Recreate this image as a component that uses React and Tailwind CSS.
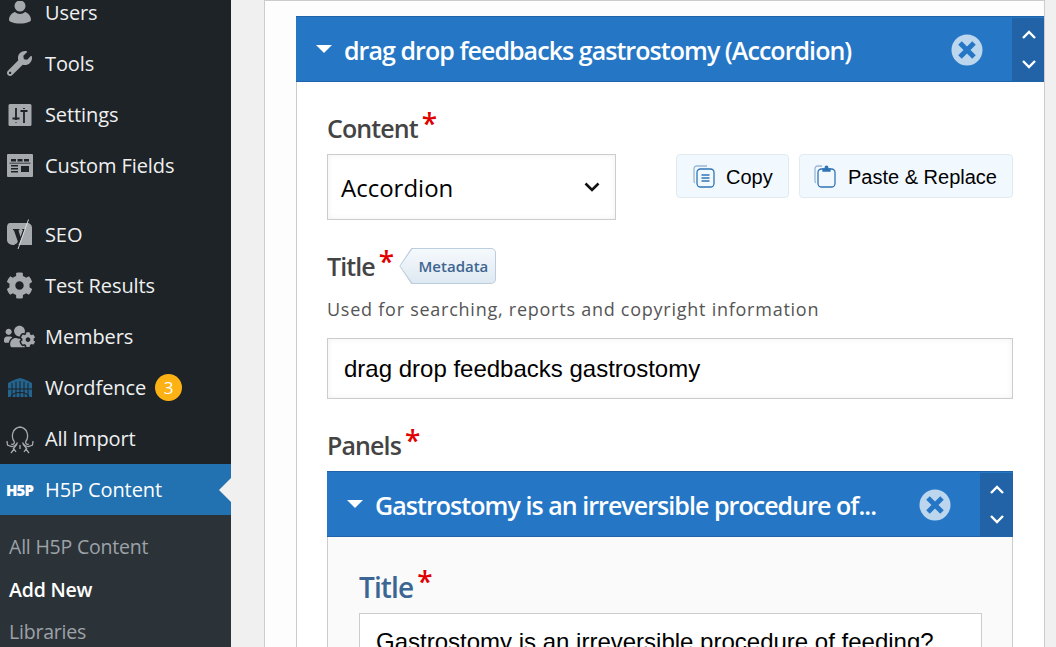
import React from 'react';
import { FaCog, FaUsersCog, FaWrench } from 'react-icons/fa';

const sans = "font-['Open_Sans','Noto_Sans',sans-serif]";

function UsersIcon() {
  return (
    <svg viewBox="0 0 24 24" className="w-[24px] h-[24px]" fill="currentColor">
      <circle cx="12" cy="5" r="5.5" />
      <path d="M1 19c0-5 4-7.5 6-8 1.500 1.300 3 2 5 2s3.500-.7 5-2c2 .5 6 3 6 8 0 1.500-4 3.500-11 3.500S1 20.500 1 19z" />
    </svg>
  );
}

function SettingsIcon() {
  return (
    <svg viewBox="0 0 24 22" className="w-[24px] h-[22px]">
      <rect x="0.500" y="0" width="23" height="22" rx="1.500" fill="currentColor" />
      <path d="M8 4v12M4.500 14.500h7M8 18v.5M16 4v1M12.500 7h7M16 8v11" stroke="#1d2327" strokeWidth="1.800" fill="none" />
    </svg>
  );
}

function FieldsIcon() {
  return (
    <svg viewBox="0 0 26 23" className="w-[26px] h-[23px]">
      <rect width="26" height="23" rx="1" fill="currentColor" />
      <path d="M4 5h5v2.500H4zM10.500 5h5v2.500h-5zM17 5h5v2.500h-5zM4 11h7v1.500H4zM4 14h7v1.500H4zM4 17h7v1.500H4zM14 12h8v6h-8z" fill="#1d2327" />
      <path d="M2.500 9.200h21" stroke="#1d2327" strokeWidth="0.800" />
    </svg>
  );
}

function YoastIcon() {
  return (
    <svg viewBox="0 0 27 31" className="w-[27px] h-[31px]">
      <path d="M4 4h17c3 0 5 2 5 5v17H8c-4 0-7-2-7-5V8c0-2 1-4 3-4z" fill="currentColor" />
      <path d="M7 10h6.500v1l-1 .5 2 6.500 2.500-7-1-.5v-.5h3l-5 13c-1 2.500-2 4-5 4.500l-.5-2c1.500-.5 3-1.500 3.300-3L8 11.500 7 11z" fill="#1d2327" />
      <path d="M22.500 0.500L12 30" stroke="#e4e5e6" strokeWidth="0.900" />
    </svg>
  );
}

function FenceIcon() {
  return (
    <svg viewBox="0 0 24 19" className="w-[24px] h-[19px]">
      <path d="M0 5c6-3 8-4 12-5 4 1 6 2 12 5v14H0z" fill="#23658e" />
      <path d="M4 5v14M8 3.500V19M12 3v16M16 3.500V19M20 5v14M0 11h24" stroke="#1d2327" strokeWidth="1" />
      <path d="M3 19c2-6 16-6 18 0" stroke="#1d2327" strokeWidth="1.200" fill="none" />
    </svg>
  );
}

function OctopusIcon() {
  return (
    <svg viewBox="0 0 28 30" className="w-[28px] h-[30px]" fill="none" stroke="currentColor" strokeWidth="1.300">
      <path d="M8 17c-3-4-2-13 6-14 8 1 9 10 6 14-1 2 0 4 3 3" />
      <path d="M8 17c1 2 0 4-3 3M1 17l.5 4 4 1.500c3 0 5-2 6-4M27 17l-.5 4-4 1.500c-3 0-5-2-6-4" />
      <path d="M11 20l-4 5M17 20l4 5M14 21v4M5 29l3-4 2 3M23 29l-3-4-2 3" />
    </svg>
  );
}

function MenuRow({ icon, label, active, children }) {
  return (
    <div className={`relative flex items-center h-[51px] ${active ? 'bg-[#2271b1] text-white' : 'text-[#f0f0f1]'}`}>
      <div className={`w-[45px] shrink-0 flex justify-center pr-[6px] ${active ? 'text-white' : 'text-[#a7aaad]'}`}>{icon}</div>
      <span className="text-[20px] leading-none tracking-[-0.1px]">{label}</span>
      {children}
      {active && (
        <span className="absolute right-0 top-1/2 -translate-y-1/2 border-y-[12px] border-y-transparent border-r-[12px] border-r-[#f0f0f1]" />
      )}
    </div>
  );
}

function Sidebar() {
  return (
    <aside className={`w-[231px] shrink-0 bg-[#1d2327] ${sans} overflow-hidden`}>
      <div className="-mt-[13px]">
        <MenuRow icon={<UsersIcon />} label="Users" />
        <MenuRow icon={<FaWrench className="w-[25px] h-[25px]" />} label="Tools" />
        <MenuRow icon={<SettingsIcon />} label="Settings" />
        <MenuRow icon={<FieldsIcon />} label="Custom Fields" />
        <div className="h-[18px]" />
        <MenuRow icon={<YoastIcon />} label="SEO" />
        <MenuRow icon={<FaCog className="w-[27px] h-[27px]" />} label="Test Results" />
        <MenuRow icon={<FaUsersCog className="w-[31px] h-[25px]" />} label="Members" />
        <MenuRow icon={<FenceIcon />} label="Wordfence">
          <span className="ml-[9px] w-[27px] h-[27px] rounded-full bg-[#fcb214] text-white text-[17px] flex items-center justify-center">3</span>
        </MenuRow>
        <MenuRow icon={<OctopusIcon />} label="All Import" />
        <MenuRow icon={<span className="text-[15px] font-extrabold tracking-[-1px] leading-none mt-[2px]">H5P</span>} label="H5P Content" active />
        <div className="bg-[#2c3338] h-[140px] pt-[11px] text-[19.500px] leading-[42.500px] tracking-[-0.2px] pl-[9px]">
          <div className="text-[#9ca2a7]">All H5P Content</div>
          <div className="text-white font-semibold">Add New</div>
          <div className="text-[#9ca2a7]">Libraries</div>
        </div>
      </div>
    </aside>
  );
}

function Required() {
  return <span className="text-[#e00000] text-[28px] leading-none ml-[4px] -translate-y-[6px] font-semibold">*</span>;
}

function Label({ children, tone = 'text-[#444] text-[25px]' }) {
  return (
    <div className={`flex items-center h-[32px] font-semibold tracking-[-0.9px] ${tone}`}>
      {children}
      <Required />
    </div>
  );
}

function Arrows() {
  return (
    <div className="w-[33px] h-[63px] my-[1px] bg-[#2263a8] flex flex-col items-center justify-center gap-[21px]">
      <svg viewBox="0 0 14 9" className="w-[14px] h-[9px]" fill="none" stroke="white" strokeWidth="2.400"><path d="M1 8l6-6 6 6" /></svg>
      <svg viewBox="0 0 14 9" className="w-[14px] h-[9px]" fill="none" stroke="white" strokeWidth="2.400"><path d="M1 1l6 6 6-6" /></svg>
    </div>
  );
}

function RemoveButton() {
  return (
    <svg viewBox="0 0 32 32" className="w-[32px] h-[32px]">
      <circle cx="16" cy="16" r="15.500" fill="#bcd6ee" />
      <path d="M9 9l14 14M23 9L9 23" stroke="#2577c6" strokeWidth="5" />
    </svg>
  );
}

function Header({ title, pr }) {
  return (
    <div className={`flex items-center h-[66px] bg-[#2577c6] border-y border-[#1f64a8] ${sans} text-white`}>
      <span className="ml-[20px] mr-[12px] border-x-[8px] border-x-transparent border-t-[8px] border-t-white" />
      <span className="pt-[4px] text-[25px] font-semibold tracking-[-0.95px] whitespace-nowrap flex-1">{title}</span>
      <div className={`mt-[1px] ${pr}`}><RemoveButton /></div>
      <Arrows />
    </div>
  );
}

function CopyIcon() {
  return (
    <svg viewBox="0 0 22 23" className="w-[22px] h-[23px]" fill="none" stroke="#2f74b5" strokeWidth="1.300">
      <path d="M2 18c-1-.5-1-1-1-2V4c0-2 1-3 3-3h10" stroke="#9ab6d6" />
      <rect x="4" y="4" width="17" height="18" rx="3.500" />
      <path d="M8.500 10h8M8.500 13h8M8.500 16h8" />
    </svg>
  );
}

function PasteIcon() {
  return (
    <svg viewBox="0 0 22 23" className="w-[22px] h-[23px]" fill="none" stroke="#2f74b5" strokeWidth="1.300">
      <path d="M2 18c-1-.5-1-1-1-2V4c0-2 1-3 3-3h4" stroke="#9ab6d6" />
      <rect x="4" y="4" width="17" height="18" rx="3.500" />
      <path d="M9 4h7v2H9z" fill="#2f74b5" />
      <circle cx="12.500" cy="2.500" r="1.300" fill="#2f74b5" />
    </svg>
  );
}

function ClipButton({ icon, label, gap, className }) {
  return (
    <button className={`h-[44px] flex items-center ${gap} bg-[#f2f9fe] border border-[#e0ebf0] rounded-[4px] font-['Liberation_Sans',sans-serif] text-[20px] text-black ${className}`}>
      {icon}
      <span className="pt-[1px]">{label}</span>
    </button>
  );
}

function MetadataTag() {
  return (
    <div className="ml-[6px] w-[97px] h-[36px] p-[1px] rounded-r-[5px] bg-[#bccddd] [clip-path:polygon(12px_0,100%_0,100%_100%,12px_100%,0_50%)]">
      <div className="w-full h-full flex items-center justify-end pr-[7px] rounded-r-[4px] bg-gradient-to-b from-[#f5f9fc] to-[#dfe9f2] text-[15px] font-semibold text-[#3e6591] [clip-path:polygon(12px_0,100%_0,100%_100%,12px_100%,0_50%)]">
        Metadata
      </div>
    </div>
  );
}

function Editor() {
  return (
    <div className="ml-[31px] w-[749px] shrink-0">
      <div className="h-[15px]" />
      <Header title="drag drop feedbacks gastrostomy (Accordion)" pr="mr-[29px]" />
      <div className={`border-x border-[#ccc] bg-white px-[30px] ${sans} h-[565px]`}>
        <div className="pt-[31px]">
          <Label>Content</Label>
        </div>
        <div className="flex items-start mt-[9px]">
          <div className="w-[289px] h-[66px] border border-[#ccc] shadow-[inset_0_0_6px_rgba(0,0,0,0.06)] flex items-center justify-between pl-[13px] pr-[15px] text-[24px] text-black">
            <span className="pt-[2px]">Accordion</span>
            <svg viewBox="0 0 16 10" className="w-[16px] h-[10px]" fill="none" stroke="#111" strokeWidth="2.600"><path d="M1.500 1.500L8 8l6.500-6.500" /></svg>
          </div>
          <ClipButton icon={<CopyIcon />} label="Copy" gap="gap-[11px]" className="ml-[60px] w-[113px] pl-[16px]" />
          <ClipButton icon={<PasteIcon />} label="Paste & Replace" gap="gap-[12px]" className="ml-[10px] w-[214px] pl-[14px]" />
        </div>
        <div className="flex items-center mt-[28px] h-[36px]">
          <div className="pt-[2px]"><Label>Title</Label></div>
          <MetadataTag />
        </div>
        <p className="mt-[13px] text-[18px] leading-[24px] tracking-[0.75px] text-[#555]">Used for searching, reports and copyright information</p>
        <div className="mt-[17px] h-[61px] w-[686px] border border-[#ccc] shadow-[inset_0_0_6px_rgba(0,0,0,0.06)] flex items-center pl-[16px] font-['Liberation_Sans',sans-serif] text-[24px] text-black">
          drag drop feedbacks gastrostomy
        </div>
        <div className="mt-[31px]">
          <Label>Panels</Label>
        </div>
        <div className="mt-[9px] w-[686px]">
          <Header title="Gastrostomy is an irreversible procedure of..." pr="mr-[29px]" />
          <div className="border-x border-[#ccc] bg-[#fafafa] h-[130px] px-[31px] pt-[34px]">
            <Label tone="text-[#3b6593] text-[28px]">Title</Label>
            <div className="mt-[10px] h-[60px] w-[623px] bg-white border border-[#ccc] pl-[16px] pt-[14px] font-['Liberation_Sans',sans-serif] text-[24px] leading-[28px] text-black">
              Gastrostomy is an irreversible procedure of feeding?
            </div>
          </div>
        </div>
      </div>
    </div>
  );
}

export default function App() {
  return (
    <div className="w-[1056px] h-[647px] flex overflow-hidden bg-[#f0f0f1]">
      <Sidebar />
      <div className="w-[33px] shrink-0" />
      <main className="w-[781px] shrink-0 h-full bg-[#fdfdfd] border-x border-t border-[#ccc] overflow-hidden">
        <Editor />
      </main>
    </div>
  );
}
